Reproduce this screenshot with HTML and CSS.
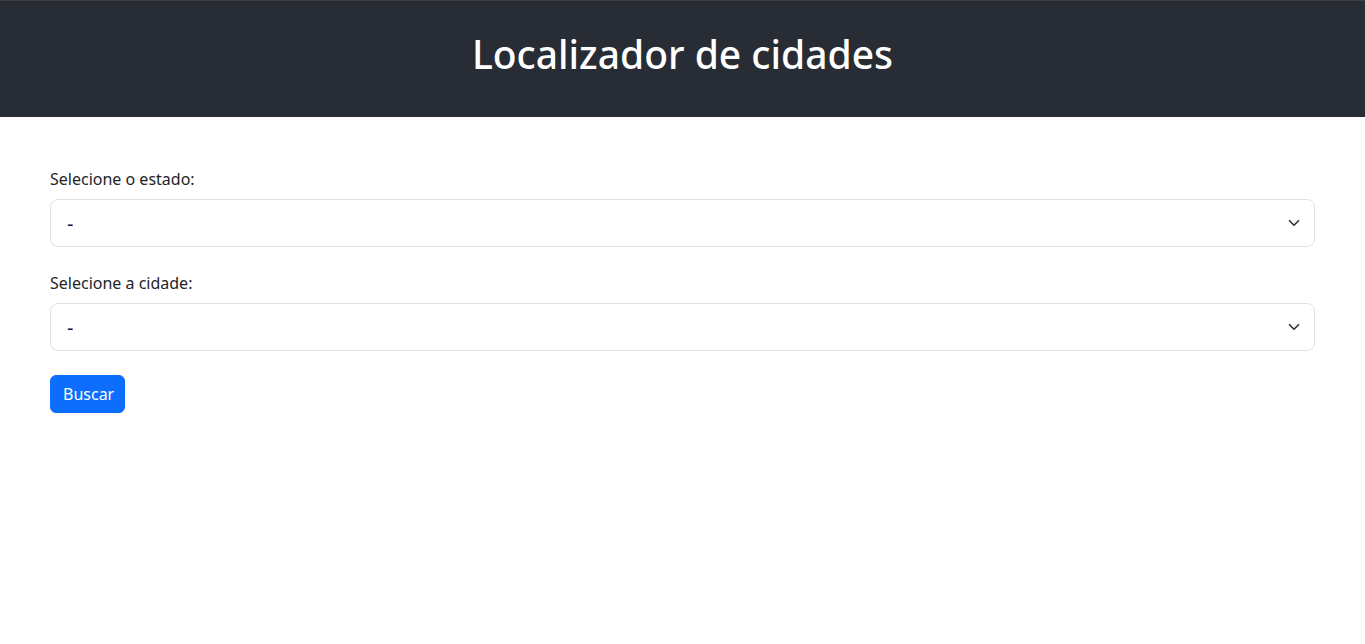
FILE: index.html
```html
<!DOCTYPE html>
<html lang="pt-BR">
<head>
<meta charset="utf-8">
<title>Localizador de cidades</title>
<link rel="stylesheet" href="styles.css">
</head>
<body>
<header class="topbar">
  <h1 class="title">Localizador de cidades</h1>
</header>
<main class="content">
  <div class="field">
    <label class="label" for="estado">Selecione o estado:</label>
    <div class="select">
      <span class="select-value">-</span>
      <svg class="chevron" width="16" height="12" viewBox="0 0 16 16"><path d="M2 5l6 6 6-6" fill="none" stroke="#343a40" stroke-width="2.3" stroke-linecap="round" stroke-linejoin="round"/></svg>
    </div>
  </div>
  <div class="field">
    <label class="label" for="cidade">Selecione a cidade:</label>
    <div class="select">
      <span class="select-value">-</span>
      <svg class="chevron" width="16" height="12" viewBox="0 0 16 16"><path d="M2 5l6 6 6-6" fill="none" stroke="#343a40" stroke-width="2.3" stroke-linecap="round" stroke-linejoin="round"/></svg>
    </div>
  </div>
  <button class="btn">Buscar</button>
</main>
</body>
</html>
```
FILE: styles.css
```css
* { box-sizing: border-box; }
body {
  margin: 0;
  font-family: "Noto Sans", "Open Sans", sans-serif;
  color: #212529;
  background: #fff;
}
.topbar {
  height: 117px;
  background: #282c34;
  border-top: 1px solid #3d3f42;
  display: flex;
  align-items: center;
  justify-content: center;
}
.title {
  margin: 0;
  color: #fff;
  font-size: 39px;
  font-weight: 500;
  line-height: 1.2;
  padding-bottom: 9px;
}
.content {
  padding: 50px 50px 0;
}
.field {
  margin-bottom: 24px;
}
.label {
  display: block;
  font-size: 16px;
  line-height: 24px;
  margin-bottom: 8px;
}
.select {
  height: 48px;
  border: 1px solid #dee2e6;
  border-radius: 8px;
  display: flex;
  align-items: center;
  justify-content: space-between;
  padding: 0 12px 0 16px;
  font-size: 20px;
}
.select-value { color: #212529; }
.chevron { display: block; }
.btn {
  font-family: inherit;
  font-size: 16px;
  line-height: 24px;
  color: #fff;
  background: #0d6efd;
  border: 1px solid #0d6efd;
  border-radius: 6px;
  padding: 6px 12px;
  height: 38px;
  width: 75px;
}
```
